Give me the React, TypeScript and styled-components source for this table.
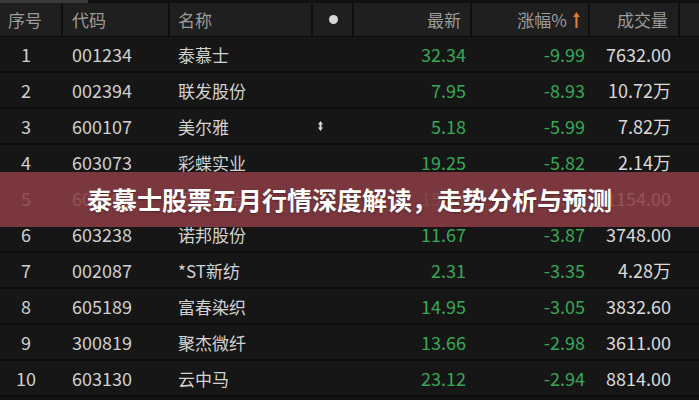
import React from "react";
import styled, { createGlobalStyle } from "styled-components";

const GlobalStyle = createGlobalStyle`
  html, body { margin: 0; padding: 0; background: #141414; }
  body { font-family: "Noto Sans CJK SC", "Noto Sans", sans-serif; }
  * { box-sizing: border-box; }
`;

const COLS = "63px 107px 143px 41px 118px 118px 90px 19px";

const Page = styled.div`
  position: relative;
  width: 699px;
  height: 400px;
  overflow: hidden;
  background: #141414;
`;

const ScrollStrip = styled.div`
  height: 3px;
  background: #111;
  display: flex;
`;

const ScrollThumb = styled.div`
  width: 88px;
  background: #3a3a3a;
`;

const HeaderRow = styled.div`
  display: grid;
  grid-template-columns: ${COLS};
  height: 34px;
  background: #1f1f1f;
  border-bottom: 1px solid #0c0c0c;
`;

const HeadCell = styled.div<{ $align?: "left" | "right" | "center"; $pl?: number; $pr?: number }>`
  display: flex;
  align-items: center;
  justify-content: ${(p) => (p.$align === "right" ? "flex-end" : p.$align === "center" ? "center" : "flex-start")};
  padding-left: ${(p) => p.$pl ?? 0}px;
  padding-right: ${(p) => p.$pr ?? 0}px;
  color: #9b9b9b;
  font-size: 17px;
  line-height: 1;
  border-right: 2px solid #0f0f0f;
  &:last-child { border-right: none; }
`;

const Dot = styled.span`
  width: 9px;
  height: 9px;
  border-radius: 50%;
  background: #d6d6d6;
  margin-left: 1px;
`;

const SortArrow = styled.span`
  color: #e0782c;
  margin-left: 6px;
  font-size: 16px;
  display: inline-flex;
`;

const Row = styled.div`
  display: grid;
  grid-template-columns: ${COLS};
  height: 36px;
  background: #161616;
  border-bottom: 2px solid #0d0d0d;
`;

const Cell = styled.div<{ $align?: "left" | "right" | "center"; $pl?: number; $pr?: number; $color?: string; $size?: number }>`
  display: flex;
  align-items: center;
  justify-content: ${(p) => (p.$align === "right" ? "flex-end" : p.$align === "center" ? "center" : "flex-start")};
  padding-left: ${(p) => p.$pl ?? 0}px;
  padding-right: ${(p) => p.$pr ?? 0}px;
  color: ${(p) => p.$color ?? "#cfcfcf"};
  font-size: ${(p) => p.$size ?? 18}px;
  line-height: 1;
  white-space: nowrap;
`;

const Banner = styled.div`
  position: absolute;
  left: 0;
  right: 0;
  top: 172px;
  height: 55px;
  background: rgba(138, 60, 67, 0.86);
  display: flex;
  align-items: center;
  justify-content: center;
`;

const BannerTitle = styled.h1`
  margin: 0;
  color: #ffffff;
  font-size: 25px;
  font-weight: 700;
  line-height: 1;
  text-shadow: 0 1px 2px rgba(0, 0, 0, 0.35);
`;

const GREEN = "#36a855";

type Stock = { i: number; code: string; name: string; price: string; chg: string; vol: string; mark?: boolean };

const data: Stock[] = [
  { i: 1, code: "001234", name: "泰慕士", price: "32.34", chg: "-9.99", vol: "7632.00" },
  { i: 2, code: "002394", name: "联发股份", price: "7.95", chg: "-8.93", vol: "10.72万" },
  { i: 3, code: "600107", name: "美尔雅", price: "5.18", chg: "-5.99", vol: "7.82万", mark: true },
  { i: 4, code: "603073", name: "彩蝶实业", price: "19.25", chg: "-5.82", vol: "2.14万" },
  { i: 5, code: "603196", name: "日播时尚", price: "15.88", chg: "-4.10", vol: "1154.00" },
  { i: 6, code: "603238", name: "诺邦股份", price: "11.67", chg: "-3.87", vol: "3748.00" },
  { i: 7, code: "002087", name: "*ST新纺", price: "2.31", chg: "-3.35", vol: "4.28万" },
  { i: 8, code: "605189", name: "富春染织", price: "14.95", chg: "-3.05", vol: "3832.60" },
  { i: 9, code: "300819", name: "聚杰微纤", price: "13.66", chg: "-2.98", vol: "3611.00" },
  { i: 10, code: "603130", name: "云中马", price: "23.12", chg: "-2.94", vol: "8814.00" },
];

const SortMark = () => (
  <svg width="5" height="10" viewBox="0 0 5 10">
    <path d="M2.5 0 L5 3.5 L3.5 3.5 L3.5 6.5 L5 6.5 L2.5 10 L0 6.5 L1.5 6.5 L1.5 3.5 L0 3.5 Z" fill="#d8d8d8" />
  </svg>
);

export default function App() {
  return (
    <Page>
      <GlobalStyle />
      <ScrollStrip>
        <ScrollThumb />
      </ScrollStrip>
      <HeaderRow>
        <HeadCell $pl={8}>序号</HeadCell>
        <HeadCell $pl={9}>代码</HeadCell>
        <HeadCell $pl={8}>名称</HeadCell>
        <HeadCell $align="center">
          <Dot />
        </HeadCell>
        <HeadCell $align="right" $pr={9}>最新</HeadCell>
        <HeadCell $align="right" $pr={8}>
          涨幅%<SortArrow>
            <svg width="7" height="16" viewBox="0 0 7 16">
              <path d="M3.5 0 L7 5 L4.6 5 L4.6 16 L2.4 16 L2.4 5 L0 5 Z" fill="#e0782c" />
            </svg>
          </SortArrow>
        </HeadCell>
        <HeadCell $align="right" $pr={10}>成交量</HeadCell>
        <HeadCell />
      </HeaderRow>
      {data.map((s) => (
        <Row key={s.i}>
          <Cell $align="center" $pr={11}>{s.i}</Cell>
          <Cell $pl={9}>{s.code}</Cell>
          <Cell $pl={8} $size={17} $color="#d2d2d2">{s.name}</Cell>
          <Cell $pl={5}>{s.mark ? <SortMark /> : null}</Cell>
          <Cell $align="right" $pr={6} $color={GREEN}>{s.price}</Cell>
          <Cell $align="right" $pr={5} $color={GREEN}>{s.chg}</Cell>
          <Cell $align="right" $pr={9} $color="#dadada">{s.vol}</Cell>
          <Cell />
        </Row>
      ))}
      <Banner>
        <BannerTitle>泰慕士股票五月行情深度解读，走势分析与预测</BannerTitle>
      </Banner>
    </Page>
  );
}
